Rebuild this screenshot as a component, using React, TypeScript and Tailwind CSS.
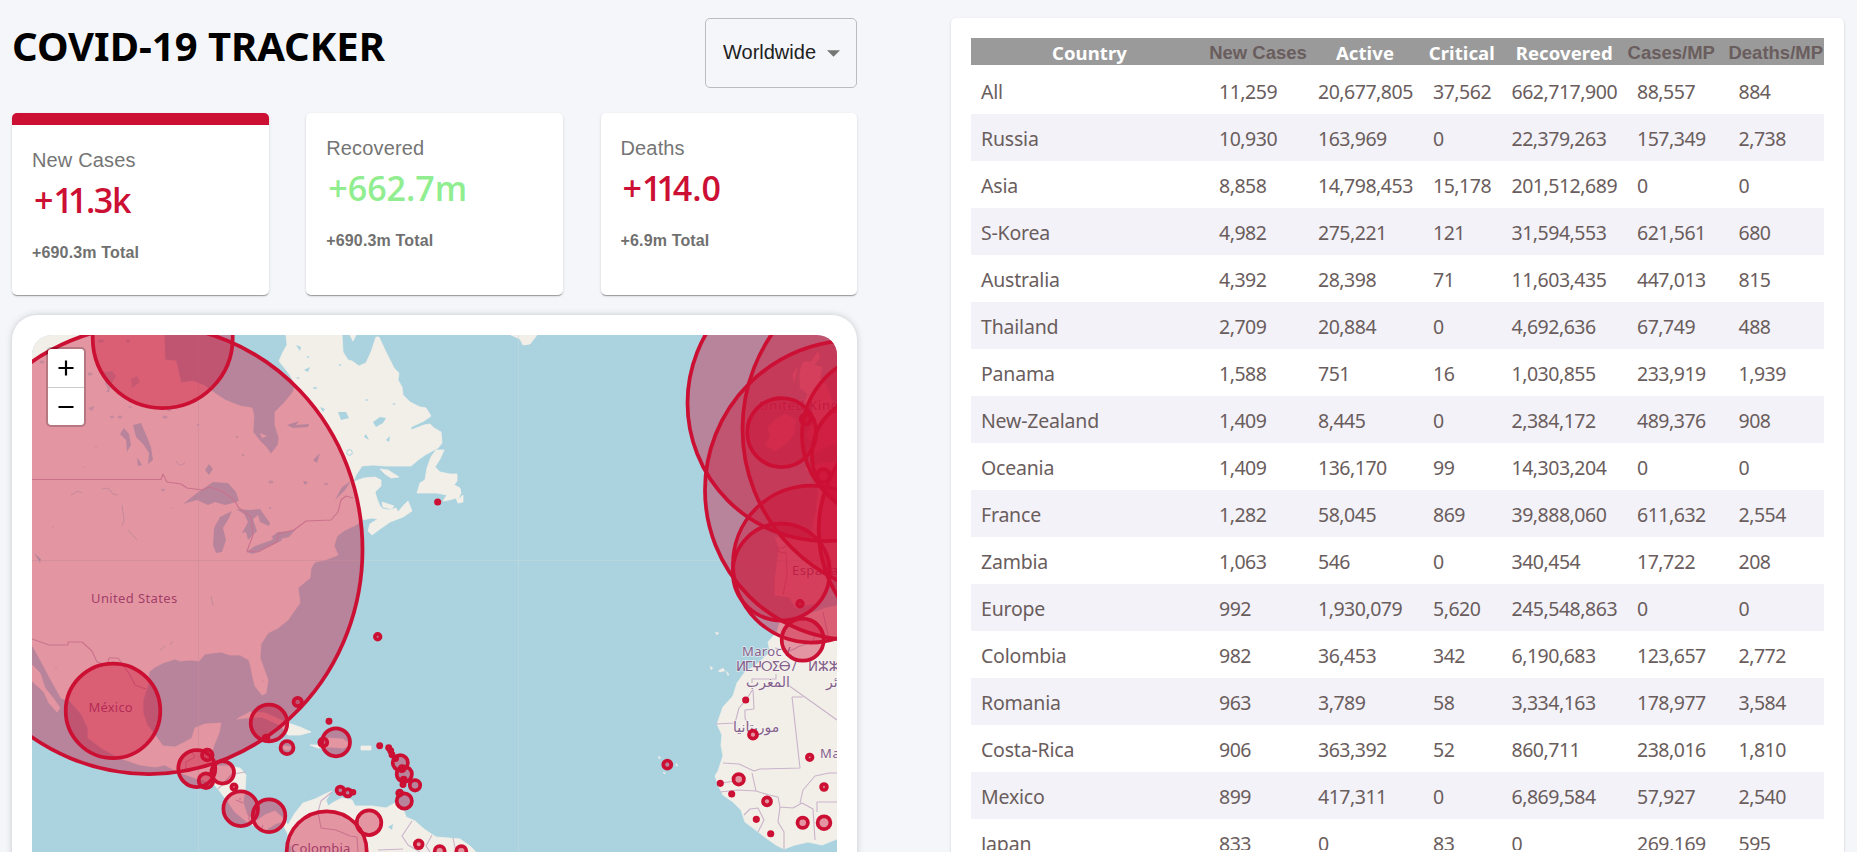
import React from "react";

const rows: string[][] = [
  ["All", "11,259", "20,677,805", "37,562", "662,717,900", "88,557", "884"],
  ["Russia", "10,930", "163,969", "0", "22,379,263", "157,349", "2,738"],
  ["Asia", "8,858", "14,798,453", "15,178", "201,512,689", "0", "0"],
  ["S-Korea", "4,982", "275,221", "121", "31,594,553", "621,561", "680"],
  ["Australia", "4,392", "28,398", "71", "11,603,435", "447,013", "815"],
  ["Thailand", "2,709", "20,884", "0", "4,692,636", "67,749", "488"],
  ["Panama", "1,588", "751", "16", "1,030,855", "233,919", "1,939"],
  ["New-Zealand", "1,409", "8,445", "0", "2,384,172", "489,376", "908"],
  ["Oceania", "1,409", "136,170", "99", "14,303,204", "0", "0"],
  ["France", "1,282", "58,045", "869", "39,888,060", "611,632", "2,554"],
  ["Zambia", "1,063", "546", "0", "340,454", "17,722", "208"],
  ["Europe", "992", "1,930,079", "5,620", "245,548,863", "0", "0"],
  ["Colombia", "982", "36,453", "342", "6,190,683", "123,657", "2,772"],
  ["Romania", "963", "3,789", "58", "3,334,163", "178,977", "3,584"],
  ["Costa-Rica", "906", "363,392", "52", "860,711", "238,016", "1,810"],
  ["Mexico", "899", "417,311", "0", "6,869,584", "57,927", "2,540"],
  ["Japan", "833", "0", "83", "0", "269,169", "595"],
];

const headers: { label: string; style: string }[] = [
  { label: "Country", style: "pr-[1px]" },
  { label: "New Cases", style: "pr-[1px]" },
  { label: "Active", style: "pr-[1px]" },
  { label: "Critical", style: "pr-[1px]" },
  { label: "Recovered", style: "" },
  { label: "Cases/MP", style: "pr-[13px]" },
  { label: "Deaths/MP", style: "pr-[1px]" },
];

const MUTED = ["New Cases", "Cases/MP", "Deaths/MP"];

const GRID = "grid grid-cols-[238px_99px_115px_78.5px_125.5px_101.5px_95.5px]";

// cx, cy, rx, ry
const circles: [number, number, number, number?][] = [
  [149, 549.5, 213.5, 224.5],
  [162.7, 338, 70],
  [113, 710.8, 47.3],
  [196.8, 768.5, 18.5],
  [207.3, 755, 5.3],
  [206, 780.7, 7.3],
  [222.7, 772.3, 11.3],
  [234, 787, 2.6],
  [240.7, 808.7, 17.3],
  [269, 815.7, 16.3],
  [269, 723, 18.3],
  [266, 738, 2.5],
  [287, 747.7, 6.5],
  [297.7, 702, 4.2],
  [329, 721.3, 1.6],
  [323.3, 742.3, 4],
  [336, 742.3, 14],
  [379.7, 745.7, 1.6],
  [388.7, 747.7, 1.6],
  [390.7, 750.7, 1.6],
  [392, 754.7, 1.6],
  [395.5, 758.5, 1.6],
  [400.3, 762.7, 7.6],
  [402, 768.7, 2.5],
  [404.3, 774.3, 7.6],
  [403.7, 779.7, 2],
  [403, 784.5, 1.6],
  [415, 785.3, 5.2],
  [399.7, 793, 2.5],
  [404.3, 801, 7.6],
  [340.3, 790.3, 3.7],
  [347.7, 792.7, 3.7],
  [353, 792.3, 1.4],
  [377.7, 636.7, 2.8],
  [437.7, 502, 1.7],
  [369, 822.7, 12.3],
  [326.7, 851.3, 40],
  [418.7, 844.3, 3.9],
  [439.7, 851, 5],
  [461.3, 851, 5],
  [667.3, 764.7, 4],
  [745.7, 700, 1.7],
  [753, 734.7, 4],
  [809.7, 757.3, 2.8],
  [738.7, 779.3, 5.2],
  [720.3, 783.3, 1.7],
  [731.7, 794, 1.7],
  [767, 801.3, 4],
  [756.3, 819.3, 1.7],
  [770.7, 833.7, 1.7],
  [824, 787, 2.9],
  [802.7, 822.7, 5.2],
  [824, 822.7, 6.4],
  [802.7, 639.7, 21],
  [800, 603.7, 2.8],
  [781.3, 572, 48.5],
  [811.5, 564, 78.5],
  [781.7, 432.5, 34.5],
  [805.7, 419.3, 5],
  [823.3, 475.7, 6.5],
  [825.5, 403, 138],
  [855, 490, 150],
  [910.5, 429, 168],
  [884, 435, 82],
  [870.6, 455, 58.6],
  [943.7, 530, 125],
];

// x, y, size of the small northern lakes
const lakes: [number, number, number][] = [
  [42, 362, 2.5], [90, 374, 2.5], [101, 341, 3], [112, 417, 2], [120, 417, 2.5],
  [130, 407, 1.5], [128, 341, 2.5], [165, 417, 2.5], [169, 410, 2], [198, 425, 1.5],
  [163, 490, 2], [172, 508, 1], [84, 467, 1], [96, 447, 1], [53, 527, 1],
  [56, 668, 1], [237, 437, 1.5], [243, 455, 1.5], [271, 482, 2.5], [270, 508, 1.5],
  [315, 388, 2], [340, 365, 1.5], [298, 378, 1.5], [367, 400, 1.5], [394, 404, 1.5],
  [330, 430, 1.5], [263, 681, 1], [326, 484, 2], [308, 357, 1.5],
];

function WorldMap() {
  return (
    <svg className="block h-[600px] w-[805px]" viewBox="32 335 805 600">
      <rect x="32" y="335" width="805" height="600" fill="#aad3df" />
      <g fill="#f2efe9" stroke="#f2efe9" strokeWidth="0.8" strokeLinejoin="round">
        <path d="M32 335H164L165 360 176 361 181 383 193 381 205 386 213 392 225 400 240 406 252 408 254 416 253 432 260 441 266 447 271 454 278 445 279 438 275 425 275 412 285 402 293 392 295 385 290 375 279 361 283 352 287 345 286 335H342L343 352 348 360 352 361 359 366 366 363 371 352 376 337 379 337 385 350 390 360 394 368 399 373 398 380 402 387 403 395 410 402 420 407 426 408 431 416 424 421 411 427 411 430 424 425 430 424 434 428 441 432 442 443 438 448 425 455 418 460 411 466 385 466 373 465 362 466 356 475 353 482 364 478 375 477 381 480 381 486 375 492 377 499 380 506 383 509 389 510 396 508 398 512 403 506 408 501 410 506 412 511 403 517 390 522 380 529 372 535 368 531 370 524 378 519 372 518 362 520 356 525 345 530 337 536 334 546 338 555 325 560 315 562 311 568 310 578 305 582 298 588 300 603 292 614 288 620 278 628 268 633 261 644 260 658 268 680 266 693 262 695 255 686 253 678 251 668 249 660 240 655 230 655 221 652 213 653 205 654 199 661 190 660 180 661 175 659 163 663 155 667 149 672 148 685 143 700 143 713 147 725 155 735 163 746 175 747 185 742 192 738 195 728 205 724 221 723 219 733 214 745 211 757 216 766 228 766 240 768 246 775 245 790 243 802 247 815 256 821 265 815 275 811 284 819 288 825 295 813 303 803 315 799 325 794 332 791 326 800 328 806 334 802 342 798 352 800 355 806 372 806 386 808 395 803 403 808 406 817 415 821 424 829 436 837 460 839 470 846 476 852V935H285L292 850 287 832 281 822 275 824 263 832 254 826 246 821 235 812 228 802 218 789 213 783 195 778 178 772 165 765 155 767 140 765 120 758 103 749 88 738 88 728 82 715 70 701 61 698 50 678 42 663 36 652 32 645Z" />
        <path d="M32 665 40 673 45 688 53 698 60 708 57 712 49 703 44 692 32 681Z" />
        <path d="M417 493 420 483 425 480 427 468 431 457 436 450 444 450 440 459 435 467 440 472 450 474 457 474 457 481 454 485 460 488 461 493 458 500 463 495 463 502 458 503 456 498 449 500 443 501 447 495 437 493 425 493Z" />
        <path d="M380 469 388 470 399 477 391 478 385 474ZM382 502 394 506 391 509 383 507Z" />
        <path d="M237 719 250 712 265 713 285 722 300 727 311 732 300 735 288 735 280 725 262 717 245 718Z" />
        <path d="M310 745 324 745 326 738 343 739 351 745 343 748 330 747 318 748ZM361 746H371V750H361ZM283 746 291 747 289 750 284 749Z" />
        <path d="M511 335 520 339 523 345 530 344 537 335ZM350 335 353 341 356 335Z" />
        <path d="M793 375 797 367 794 382ZM800 372 803 362 811 362 818 352 820 357 814 365 822 367 820 378 826 385 832 400 837 412V443L823 448 811 456 803 456 814 444 806 436 814 422 812 408 805 402 808 394 800 388Z" />
        <path d="M765 445 770 436 768 427 776 419 785 414 796 420 794 434 787 443 775 451Z" />
        <path d="M837 462 823 463 805 468 815 478 818 492 816 510 810 539 798 540 775 537 779 548 775 580 775 595 789 597 796 608 806 605 818 603 826 590 837 574Z" />
        <path d="M837 606 826 608 812 613 796 617 788 622 780 622 777 632 768 642 770 652 756 665 745 672 737 683 733 696 723 707 717 724 722 735 721 745 723 756 718 771 715 776 719 787 723 795 733 802 741 810 745 822 757 831 766 838 776 845 784 849 795 845 808 842 822 845 837 839Z" />
        <path d="M715 632 719 633 717 635ZM710 666 713 668 711 670ZM718 671 723 668 725 671 720 672ZM726 671 729 674 728 676ZM658 756 661 758 659 759ZM663 772 666 773 664 774ZM676 763 678 766 676 766Z" strokeOpacity="0.4" />
      </g>
      <g fill="#aad3df">
        <path d="M133 425 141 423 147 437 151 447 153 460 148 464 149 453 143 444 136 437ZM124 428 129 434 131 445 127 452 126 440 120 434ZM137 457 142 465 138 466ZM205 470 209 464 213 469 209 475Z" />
        <path d="M183 504 197 493 213 482 228 483 236 492 239 501 233 503 225 505 215 502 208 505 197 500Z" />
        <path d="M232 511 220 517 214 528 213 545 216 553 222 552 226 540 223 528 229 518Z" />
        <path d="M236 509 250 510 260 509 270 523 269 526 260 522 258 515 253 519 257 531 248 540 246 532 242 533 248 522 244 514Z" />
        <path d="M246 552 255 546 272 540 277 534 284 534 281 541 270 546 253 554ZM34 553 41 559 40 563ZM271 537 278 532 291 531 297 528 289 537 276 540Z" />
        <path d="M287 425 299 421 296 425 309 424 308 427 293 428ZM313 460 320 453 317 463ZM303 481 308 482 305 485ZM335 500 342 487 351 481 345 490Z" />
        <path d="M260 433 267 436 262 438Z" fill="#f2efe9" />
        <path d="M373 422 380 417 386 418 383 423 376 427ZM338 412 346 412 349 418 341 420ZM296 345 301 347 300 351ZM304 370 310 367 308 372ZM320 407 325 409 323 412ZM364 437 366 434 369 440ZM386 440 390 436 389 442ZM388 827 393 824 392 830Z" />
        <path d="M104 372 112 371 116 376 108 389 105 383ZM131 379 137 376 140 382 132 388ZM88 408 95 406 92 411ZM106 392 111 385 109 392Z" opacity="0.75" />
      </g>
      <g fill="#aad3df" opacity="0.7">
        {lakes.map(([x, y, r], i) => (
          <ellipse key={i} cx={x} cy={y} rx={r} ry={r * 0.6} />
        ))}
      </g>
      <path d="M176 461C178 466 183 466 185 462M71 495 78 491 82 493M102 489 108 488 113 494 118 495M122 505 124 520 122 526M128 530 137 540M211 596 213 606M160 650 165 646M170 645 173 641" fill="none" stroke="#aad3df" strokeWidth="1" opacity="0.7" />
      <circle cx="349.5" cy="452.5" r="2.8" fill="none" stroke="#aad3df" strokeWidth="1" />
      <g fill="none" stroke="#c9b3c9" strokeWidth="1.1" strokeLinejoin="round">
        <path d="M32 479.500H161L163 474 167 482 181 484 187 488 202 490 210 487 222 491 235 501 238 507 251 517 253 535 247 551 258 552 277 542 278 534 294 530 306 521 331 520 338 512 341 500 346 496 353 498" />
        <path d="M32 639 49 645H68V642H82L92 651 97 662 107 665 109 658H118L130 675 135 685 146 689" />
        <path d="M186 772V762L195 757 190 750M213 762V752M218 789 232 774 246 772M236 800 243 803 M240 800V798M249 812V821M263 825 261 831" />
        <path d="M332 792 321 801 318 812 321 828 336 830 350 836 357 837 358 852M412 821 402 836 408 845 420 852M432 835 426 846 430 852M453 838 456 852M378 850 403 849" />
        <path d="M753 689 754 709 745 710V718L749 726M752 683V679H776V674M716 724 735 723 739 708 746 700 753 689M788 685 837 720M792 697H803M792 697 800 768 760 769 754 771 739 764 723 763M752 773 756 791 738 790 720 792M756 791 769 795 778 797 780 807 778 822 784 832 784 849M780 807 793 808 802 803 813 809 815 840M800 803 803 790 815 776 829 773 837 773M817 812V802H837M744 815 750 809 758 808 764 820 758 832M722 783 735 781M776 548H782L787 546M775 549 782 553 786 552 787 575 783 595M775 648 790 651 800 646 813 642 815 633 829 640 823 612" />
      </g>
      <g stroke="#c3d9de" strokeWidth="1" opacity="0.5">
        <path d="M198.500 335V860M518.500 335V860M32 560.500H837" fill="none" />
      </g>
      <g
        className="font-['Noto_Sans','DejaVu_Sans',sans-serif]"
        fill="#84608b"
        stroke="#f7f4f3"
        strokeWidth="1.6"
        strokeOpacity="0.7"
        paintOrder="stroke"
        fontSize="13"
        letterSpacing="0.8"
      >
        <text x="91" y="603" textLength="87">United States</text>
        <text x="88.500" y="712" textLength="45">México</text>
        <text x="291" y="853" textLength="60">Colombia</text>
        <text x="759" y="410">United Kingdom</text>
        <text x="792" y="575" letterSpacing="0.4">España</text>
        <text x="742" y="656" fontSize="13" letterSpacing="0.4" textLength="49">Maroc /</text>
        <text x="736" y="671" fontSize="13.500" letterSpacing="0.2" textLength="61">ⵍⵎⵖⵔⵉⴱ /</text>
        <text x="808" y="671" fontSize="13.500" letterSpacing="0">ⵍⵣⵣⴰⵢⴻⵔ</text>
        <text x="746" y="687" fontSize="14" letterSpacing="0">المغرب</text>
        <text x="826" y="687" fontSize="14" letterSpacing="0">ائر</text>
        <text x="733" y="732" fontSize="14" letterSpacing="0">موريتانيا</text>
        <text x="820" y="758" fontSize="13">Mali</text>
      </g>
      <g fill="#cc1034" fillOpacity="0.4" stroke="#cc1034" strokeWidth="3.75">
        {circles.map(([cx, cy, rx, ry], i) => (
          <ellipse key={i} cx={cx} cy={cy} rx={rx} ry={ry ?? rx} />
        ))}
      </g>
    </svg>
  );
}

function StatCard(props: {
  title: string;
  value: React.ReactNode;
  total: string;
  active?: boolean;
  green?: boolean;
}) {
  return (
    <div
      className={
        "h-[182px] w-[256.500px] rounded-[5px] bg-white px-5 shadow-[0_2px_1px_-1px_rgba(0,0,0,0.2),0_1px_1px_0_rgba(0,0,0,0.14),0_1px_3px_0_rgba(0,0,0,0.12)] " +
        (props.active ? "border-t-[12px] border-[#cc1034] pt-5" : "pt-5")
      }
    >
      <p className="h-[30px] font-['Liberation_Sans',sans-serif] text-[20px] leading-[30px] tracking-[0.15px] text-[#757575]">
        {props.title}
      </p>
      <h2
        className={
          "mt-[4px] h-[43px] pl-[2px] font-['Open_Sans','Noto_Sans',sans-serif] text-[34px] leading-[43px] font-semibold whitespace-nowrap " +
          (props.green ? "text-[#90ee90]" : "text-[#cc1034]")
        }
      >
        {props.value}
      </h2>
      <p className="mt-[19px] font-['Liberation_Sans',sans-serif] text-[16px] leading-[24px] font-bold tracking-[0.15px] text-[#707070]">
        {props.total}
      </p>
    </div>
  );
}

export default function App() {
  return (
    <div className="flex h-[852px] w-full items-start justify-between overflow-hidden bg-[#f5f6fa] pt-[18px] pr-[13px] pl-3">
      <main className="w-[845px]">
        <header className="flex h-[70px] items-start justify-between">
          <h1 className="-mt-px font-['Noto_Sans',sans-serif] text-[40px] leading-[57px] font-bold whitespace-nowrap text-black">
            COVID-19 TRACKER
          </h1>
          <button className="flex h-[70px] w-[152px] items-center rounded-[5px] border border-[#bbbcbf] pl-[17px] font-['Liberation_Sans',sans-serif] text-[20px] text-[#212121]">
            <span className="-mt-0.5">Worldwide</span>
            <svg className="ml-[11px] h-[7px] w-[13px]" viewBox="0 0 13 7">
              <path d="M0 0.200H13L6.500 6.700Z" fill="#757575" />
            </svg>
          </button>
        </header>

        <section className="mt-[25px] flex justify-between">
          <StatCard
            active
            title="New Cases"
            value={
              <>
                +<span className="tracking-[-5px]">1</span>
                <span className="tracking-[-1.4px]">1.3k</span>
              </>
            }
            total="+690.3m Total"
          />
          <StatCard green title="Recovered" value="+662.7m" total="+690.3m Total" />
          <StatCard
            title="Deaths"
            value={
              <>
                +<span className="tracking-[-5px]">1</span>
                <span className="tracking-[-3px]">1</span>4.0
              </>
            }
            total="+6.9m Total"
          />
        </section>

        <section className="mt-5 h-[640px] rounded-[25px] bg-white p-5 shadow-[0_0_8px_-2px_rgba(0,0,0,0.3)]">
          <div className="relative overflow-hidden rounded-[20px]">
            <WorldMap />
            <div className="absolute top-3 left-[13.500px] flex w-[40px] flex-col rounded-[5px] border-2 border-black/20 bg-white bg-clip-padding">
              <button className="flex h-[39px] items-center justify-center border-b border-[#ccc]">
                <svg className="mb-px h-4 w-4" viewBox="0 0 16 16">
                  <path d="M8 0.500V15.500M0.500 8H15.500" stroke="#000" strokeWidth="2.200" />
                </svg>
              </button>
              <button className="flex h-[37px] items-center justify-center">
                <svg className="h-4 w-4" viewBox="0 0 16 16">
                  <path d="M0.500 8H15.500" stroke="#000" strokeWidth="2.200" />
                </svg>
              </button>
            </div>
          </div>
        </section>
      </main>

      <aside className="h-[860px] w-[893px] rounded-[5px] bg-white p-5 shadow-[0_2px_1px_-1px_rgba(0,0,0,0.2),0_1px_1px_0_rgba(0,0,0,0.14),0_1px_3px_0_rgba(0,0,0,0.12)]">
        <div className="h-[812px] w-[853px] overflow-hidden">
          <div className={GRID + " mb-0.5 h-[27px] bg-[#9a9a9b]"}>
            {headers.map((h) => (
              <div
                key={h.label}
                className={
                  "flex items-center justify-center pt-[3px] text-[18.5px] leading-[22px] font-bold whitespace-nowrap " +
                  h.style +
                  (MUTED.includes(h.label)
                    ? " font-['Liberation_Sans',sans-serif] text-[#6a5d5d]"
                    : " font-['Noto_Sans',sans-serif] tracking-[0.1px] text-white")
                }
              >
                {h.label}
              </div>
            ))}
          </div>
          {rows.map((r) => (
            <div
              key={r[0]}
              className={
                GRID +
                " h-[47px] font-['Noto_Sans',sans-serif] text-[19.5px] leading-[49px] tracking-[-0.48px] text-[#6a5d5d] even:bg-white odd:bg-[#f3f2f8]"
              }
            >
              {r.map((c, i) => (
                <div key={i} className={i === 0 ? "pl-2.5 tracking-[-0.2px] whitespace-nowrap" : "pl-2.5 whitespace-nowrap"}>
                  {c}
                </div>
              ))}
            </div>
          ))}
        </div>
      </aside>
    </div>
  );
}
